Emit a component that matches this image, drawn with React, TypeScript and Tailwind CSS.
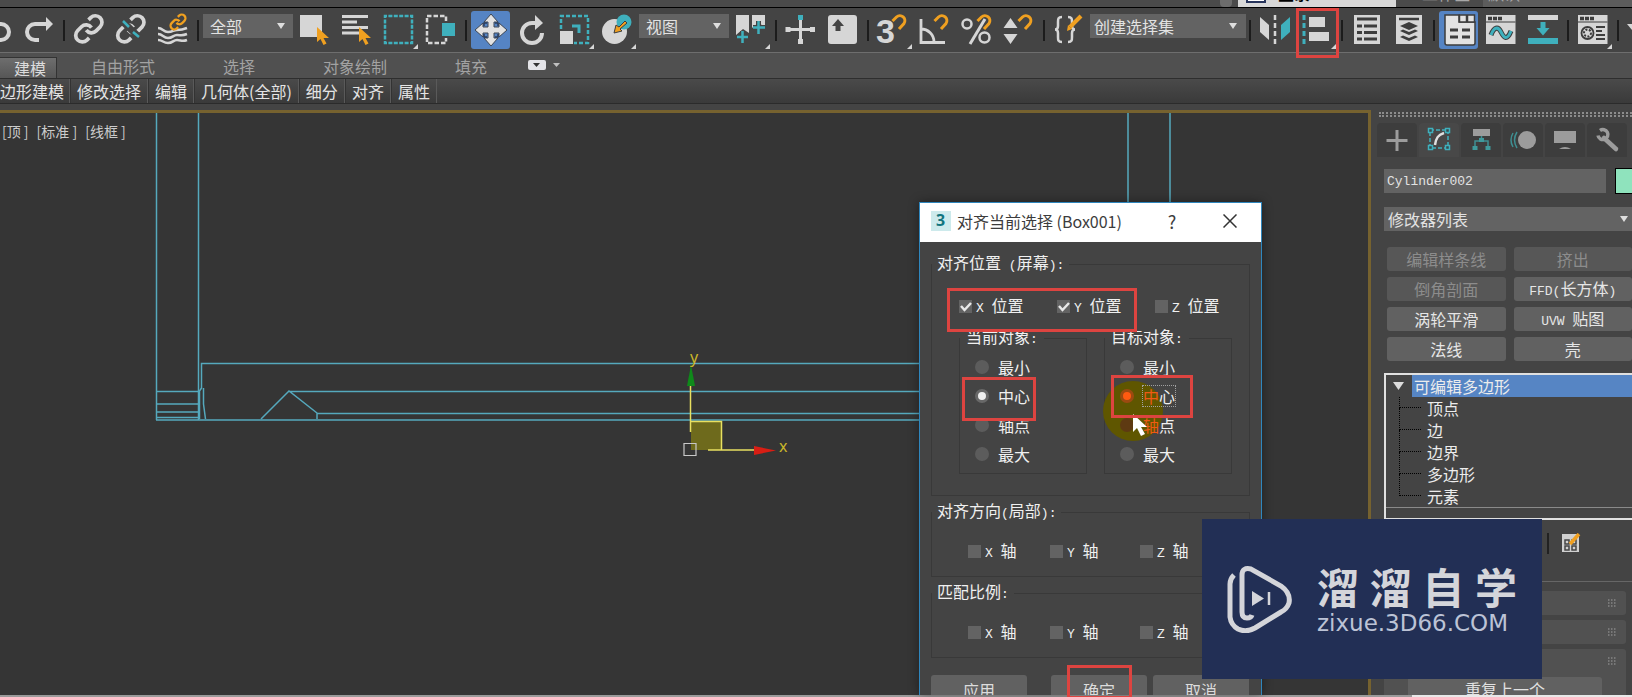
import { useState } from 'react';
import type { ReactNode } from 'react';
import clsx from 'clsx';

const W = '#d6d6d6';
const TEAL = '#3fb0bd';
const ORANGE = '#f0a020';
const DARK = '#3d3d3d';

const LINK_A = 'M10 13a5 5 0 0 0 7.54.54l3-3a5 5 0 0 0-7.07-7.07l-1.72 1.71';
const LINK_B = 'M14 11a5 5 0 0 0-7.54-.54l-3 3a5 5 0 0 0 7.07 7.07l1.71-1.71';

// Latin characters are half-width in the tool font, CJK ones full-width
function Mixed({ text }: { text: string }) {
  const parts = text.split(/([\x20-\x7e]+)/).filter(Boolean);
  return (
    <span className="whitespace-pre">
      {parts.map((part, i) =>
        /^[\x20-\x7e]/.test(part) ? (
          <span key={i} className="font-['Liberation_Mono','Noto_Sans_CJK_SC',monospace] text-[13px]">
            {part}
          </span>
        ) : (
          part
        )
      )}
    </span>
  );
}

type ToolProps = { label: string; flyout?: boolean; active?: boolean; children: ReactNode };

function Tool({ label, flyout, active, children }: ToolProps) {
  return (
    <button type="button" aria-label={label} aria-pressed={active} className="h-[42px] w-[42px] shrink-0">
      <svg viewBox="0 0 42 42" className="h-[42px] w-[42px]" fill="none">
        {active && <rect x="1" y="2" width="39" height="38" rx="3" fill="#5584c4" />}
        {children}
        {flyout && <path d="M40 35v5h-5z" fill={W} />}
      </svg>
    </button>
  );
}

function Separator() {
  return (
    <div className="flex w-2 shrink-0 justify-center">
      <div className="h-[21px] w-[2px] bg-[#1c1c1c]" />
    </div>
  );
}

function Magnet({ x = 19 }: { x?: number }) {
  return (
    <g transform={`translate(${x} 5)`} stroke={ORANGE} strokeWidth="3">
      <path d="M1.500 7l4-4a5 5 0 0 1 7.500 6.500L8 15" />
    </g>
  );
}

function Cursor() {
  return <path d="M23 18v15l3.500-3 3 6 3-1.500-3-5.500h5.500z" fill={ORANGE} />;
}

function Dropdown({ label, options, className }: { label: string; options: string[]; className: string }) {
  return (
    <div className={clsx('relative shrink-0', className)}>
      <select
        aria-label={label}
        className="block h-6 w-full appearance-none bg-[#636363] px-1 text-base leading-6 text-[#e2e2e2] outline-none"
      >
        {options.map((o) => (
          <option key={o}>{o}</option>
        ))}
      </select>
      <svg viewBox="0 0 8 6" className="pointer-events-none absolute right-[9px] top-[9px] h-[6px] w-2">
        <path d="M0 0h8L4 6z" fill="#dedede" />
      </svg>
    </div>
  );
}

function TopStrip() {
  return (
    <header className="flex h-2 shrink-0 items-end overflow-hidden border-b border-black bg-[#4a4a4a] pl-[1220px] text-base leading-7">
      <span className="h-[7px] w-3 shrink-0 rounded-b bg-[#6c6c6c]" />
      <span className="ml-[6px] flex h-[7px] w-[158px] shrink-0 items-end gap-3 bg-[#d8d8d8] pl-2 font-bold text-black">
        <span className="mb-1 h-1 w-5 border-2 border-t-0 border-[#27345c] bg-white" />
        登录
      </span>
      <span className="ml-[26px] w-[61px] shrink-0 text-[#a8a8a8]">工作区</span>
      <span className="flex h-[7px] flex-1 items-end bg-[#5c5c5c] pl-[5px] text-[#a8a8a8]">默认</span>
    </header>
  );
}

function Toolbar() {
  return (
    <div role="toolbar" className="flex h-11 shrink-0 items-center overflow-hidden bg-[#444444]">
      <div className="-ml-6 flex shrink-0">
        <Tool label="撤销">
          <path d="M14 15h11a8 8 0 0 1 0 16h-3" stroke={W} strokeWidth="4" />
        </Tool>
        <Tool label="重做">
          <path d="M28 15H17a8 8 0 0 0 0 16h4" stroke={W} strokeWidth="4" />
          <path d="M28 8l7 7-7 7z" fill={W} />
        </Tool>
      </div>
      <Separator />
      <Tool label="选择并链接">
        <g transform="translate(5 4) scale(1.320)" stroke={W} strokeWidth="2.800">
          <path d={LINK_A} />
          <path d={LINK_B} />
        </g>
      </Tool>
      <Tool label="取消链接">
        <g transform="translate(5 4) scale(1.320)" stroke={W} strokeWidth="2.800">
          <path d={LINK_A} />
          <path d={LINK_B} />
        </g>
        <path d="M12 12l18 17" stroke="#444" strokeWidth="7" />
        <path d="M13 12l6 6M23 23l6 5" stroke={TEAL} strokeWidth="2.500" />
      </Tool>
      <Tool label="绑定到空间扭曲">
        <path
          d="M6 19c5 0 5 4 10 4s5-2 9-2 5 0 10-2M6 25c5 0 5 4 10 4s5-3 9-3 5 1 10-1M6 31c5 0 5 3 10 3s5-3 9-3 5 2 10 0"
          stroke={W}
          strokeWidth="2.500"
        />
        <g transform="translate(17 4) scale(0.750)">
          <path d="M3 20L21 4" stroke="#444" strokeWidth="10" />
          <g stroke={ORANGE} strokeWidth="3">
            <path d={LINK_A} />
            <path d={LINK_B} />
          </g>
        </g>
      </Tool>
      <Separator />
      <Dropdown label="选择过滤器" options={['全部', '几何体', '图形']} className="mb-[9px] w-[92px] px-px [&>select]:pl-[7px]" />
      <Tool label="选择对象">
        <path d="M6 6h22v22H6z" fill={W} />
        <Cursor />
      </Tool>
      <Tool label="按名称选择">
        <path d="M6 7.500h26M6 13h15M6 18.500h26M6 24h20" stroke={W} strokeWidth="3" />
        <Cursor />
      </Tool>
      <Tool label="矩形选择区域" flyout>
        <rect x="7" y="7" width="27" height="27" stroke={TEAL} strokeWidth="2.500" strokeDasharray="4 1.400" strokeDashoffset="2" />
      </Tool>
      <Tool label="窗口/交叉">
        <path d="M26 12V7H7v27h19v-5" stroke={W} strokeWidth="2.500" strokeDasharray="4.500 2" />
        <path d="M22 14h13v13H22z" fill={TEAL} />
      </Tool>
      <Separator />
      <Tool label="选择并移动" active>
        <g stroke="#3c4654" strokeWidth="1" fill="#e2e2e2">
          <path d="M21 5l7 8h-4v5h5v-4l8 7-8 7v-4h-5v5h4l-7 8-7-8h4v-5h-5v4l-8-7 8-7v4h5v-5h-4z" />
        </g>
        <path d="M14 17v-3h3M25 14h3v3M28 25v3h-3M17 28h-3v-3" stroke="#2c3c58" strokeWidth="1.500" />
      </Tool>
      <Tool label="选择并旋转">
        <path d="M24 14h-4a10 10 0 1 0 10 10" stroke={W} strokeWidth="4" />
        <path d="M23 6l8 8-8 7z" fill={W} />
      </Tool>
      <Tool label="选择并均匀缩放" flyout>
        <path d="M7 20V7h27v27H20" stroke={TEAL} strokeWidth="2.500" strokeDasharray="4 2" />
        <path d="M18 17h7v7" stroke={TEAL} strokeWidth="3" />
        <path d="M6 22h13v13H6z" fill={W} />
      </Tool>
      <Tool label="选择并放置" flyout>
        <circle cx="18.500" cy="22.500" r="12.500" fill={W} />
        <circle cx="28" cy="13" r="7.500" fill={TEAL} />
        <path d="M29 12l-6 6-3-2-2 8 8-2-2-2 7-6z" fill={ORANGE} stroke={DARK} strokeWidth="1" />
      </Tool>
      <Dropdown label="参考坐标系" options={['视图', '屏幕', '世界']} className="mb-[9px] w-[92px] px-px [&>select]:pl-[7px]" />
      <Tool label="使用轴点中心" flyout>
        <path d="M6 6h13v18l-6-4-7 6zM22 6h13v14l-6-7-7 6z" fill={W} />
        <path d="M12.500 22v12M7 28h11M28.500 12v13M23 18.500h12" stroke="#444" strokeWidth="5" />
        <path d="M12.500 22v12M7 28h11M28.500 12v13M23 18.500h12" stroke={TEAL} strokeWidth="2.500" />
      </Tool>
      <Separator />
      <Tool label="选择并操纵">
        <path d="M7 20.500h27M20.500 9v25" stroke={W} strokeWidth="3" />
        <path d="M5.500 18h5v5h-5zM30 18h5v5h-5zM18 30h5v5h-5z" fill={W} />
        <path d="M18 6h5v5h-5z" fill={TEAL} />
      </Tool>
      <Tool label="键盘快捷键覆盖切换">
        <rect x="6" y="6" width="29" height="29" rx="3" fill={W} />
        <path d="M16 10l6 7h-3.500v5h-5v-5H10z" fill="#444" />
      </Tool>
      <Separator />
      <Tool label="捕捉开关" flyout>
        <text x="4" y="34" fill={W} fontSize="34" fontWeight="700" fontFamily="Liberation Sans">
          3
        </text>
        <Magnet />
      </Tool>
      <Tool label="角度捕捉切换">
        <path d="M7 10v23.500h24M7 20a13 13 0 0 1 13 13" stroke={W} strokeWidth="2.800" />
        <Magnet />
      </Tool>
      <Tool label="百分比捕捉切换">
        <circle cx="11" cy="15" r="4.500" stroke={W} strokeWidth="2.500" />
        <circle cx="28.500" cy="28.500" r="5" stroke={W} strokeWidth="2.500" />
        <path d="M14 35L29 10" stroke={W} strokeWidth="3" />
        <Magnet x={20} />
      </Tool>
      <Tool label="微调器捕捉切换">
        <path d="M12.500 9l7 10h-14zM12.500 35l7-10h-14z" fill={W} />
        <Magnet />
      </Tool>
      <Separator />
      <Tool label="编辑命名选择集">
        <path
          d="M14 8c-4 0-4 2-4 5v4c0 2-1 3.500-3 3.500 2 0 3 1.500 3 3.500v4c0 3 0 5 4 5M20 8c4 0 4 2 4 5v4c0 2 1 3.500 3 3.500-2 0-3 1.500-3 3.500v4c0 3 0 5-4 5"
          stroke={W}
          strokeWidth="2.500"
        />
        <path d="M33 7L22 18" stroke={ORANGE} strokeWidth="4" />
        <path d="M20 16l4 4-5 2z" fill={ORANGE} />
      </Tool>
      <Dropdown label="命名选择集" options={['创建选择集']} className="mb-[9px] w-[156px]" />
      <Separator />
      <Tool label="镜像">
        <path d="M6 8l9 8v15l-9-8z" fill={W} />
        <path d="M21 6v29" stroke={W} strokeWidth="2.500" strokeDasharray="5 3" />
        <path d="M36 8l-9 8v15l9-8z" fill={TEAL} />
      </Tool>
      <Tool label="对齐" flyout>
        <path d="M8 6v29" stroke={TEAL} strokeWidth="3" strokeDasharray="5 3" />
        <path d="M13 8h16v10H13zM13 23h20v9H13z" fill={W} />
      </Tool>
      <Separator />
      <Tool label="切换层资源管理器">
        <path d="M8 6h26v29H8z" fill={W} />
        <path d="M11 10h20M11 17h5M18 17h13M11 23.500h5M18 23.500h13M11 30h5M18 30h13" stroke={DARK} strokeWidth="2.800" />
      </Tool>
      <Tool label="切换场景资源管理器">
        <path d="M8 6h26v29H8z" fill={W} />
        <path d="M11 10h20" stroke={DARK} strokeWidth="2.500" />
        <path
          d="M21 13l9 4-9 4-9-4zM12 22l3-1.500 6 2.500 6-2.500 3 1.500-9 4zM12 28l3-1.500 6 2.500 6-2.500 3 1.500-9 4z"
          fill={DARK}
        />
      </Tool>
      <Separator />
      <Tool label="显示功能区" active>
        <path d="M7 6h14v7h16v21q0 2-2 2H9q-2 0-2-2z" fill="#e2e2e2" stroke={DARK} strokeWidth="1.500" />
        <path d="M21.500 6h7v7h-7zM29.500 6h7v7h-7z" fill="#e2e2e2" stroke={DARK} strokeWidth="1.500" />
        <path d="M12 21h8M24 21h8M12 28h8M24 28h8" stroke={DARK} strokeWidth="3" />
      </Tool>
      <Tool label="曲线编辑器">
        <path d="M6 6h29.500v29H6z" fill={W} />
        <path d="M8 9.500h14" stroke={DARK} strokeWidth="3.500" strokeDasharray="4 1" />
        <path d="M6 13h29.500" stroke={DARK} strokeWidth="1" />
        <path d="M11 26c3-8 7-9 10-3s6 9 10-1" stroke={DARK} strokeWidth="5" />
        <path d="M11 26c3-8 7-9 10-3s6 9 10-1" stroke={TEAL} strokeWidth="3" />
      </Tool>
      <Tool label="图解视图">
        <path d="M6 6h30v5H6z" fill={W} />
        <path d="M6 29h30v6H6z" fill={TEAL} />
        <path d="M18.500 13h5v6h4L21 26.500 14.500 19h4z" fill={TEAL} />
      </Tool>
      <Separator />
      <Tool label="材质编辑器" flyout>
        <path d="M6 6h29.500v29H6z" fill={W} />
        <path d="M8 9.500h14" stroke={DARK} strokeWidth="3.500" strokeDasharray="4 1" />
        <path d="M6 13h29.500" stroke={DARK} strokeWidth="1" />
        <circle cx="15.500" cy="24" r="6" stroke={DARK} strokeWidth="1.800" />
        <circle cx="15.500" cy="24" r="3.500" stroke={DARK} strokeWidth="2" strokeDasharray="2 1.500" />
        <path d="M24 18h9M24 22h6M24 26h9M24 30h9" stroke={DARK} strokeWidth="2" />
      </Tool>
      <Separator />
      <Tool label="渲染设置">
        <path d="M5 15h10v12z" fill={W} />
      </Tool>
    </div>
  );
}

function Ribbon() {
  const tabs = ['自由形式', '选择', '对象绘制', '填充'];
  const panels = ['修改选择', '编辑', '几何体(全部)', '细分', '对齐', '属性'];
  return (
    <>
      <nav className="flex h-[27px] shrink-0 border-b border-t border-b-[#2e2e2e] border-t-[#6e6e6e] bg-[#505050] text-base leading-[26px] text-[#a2a2a2]">
        <button
          type="button"
          className="mt-1 w-[57px] border-r border-t border-[#333] bg-linear-to-b from-[#6e6e6e] to-[#565656] pl-[14px] text-left leading-[18px] text-[#dcdcdc]"
        >
          建模
        </button>
        {tabs.map((t) => (
          <button key={t} type="button" className="px-[34px]">
            {t}
          </button>
        ))}
        <button type="button" aria-label="最小化功能区" className="ml-[7px] flex items-center gap-[7px] pb-px">
          <svg viewBox="0 0 18 10" className="h-[10px] w-[18px]">
            <rect width="18" height="10" rx="2" fill="#e4e4e8" />
            <path d="M5 3h7L8.500 7z" fill="#333" />
          </svg>
          <svg viewBox="0 0 7 4" className="h-1 w-[7px]">
            <path d="M0 0h7L3.500 4z" fill="#c0c0c0" />
          </svg>
        </button>
      </nav>
      <div className="flex h-[25px] shrink-0 border-b border-[#2b2b2b] bg-linear-to-b from-[#4a4a4a] to-[#3a3a3a] text-base leading-6 text-[#e4e4e4]">
        <button type="button" className="w-[70px] border-r border-[#5a5a5a] text-left">
          边形建模
        </button>
        {panels.map((p) => (
          <button key={p} type="button" className="border-l border-r border-l-[#333] border-r-[#5a5a5a] px-[6px]">
            {p}
          </button>
        ))}
      </div>
    </>
  );
}

function Viewport() {
  return (
    <section className="relative min-w-0 flex-1 border-r-[3px] border-t-[3px] border-[#76622f] bg-[#353535]">
      <div className="flex gap-2 pl-[2px] pt-[6px] text-sm leading-6 text-[#cccccc]">
        <button type="button">[顶 ]</button>
        <button type="button">[标准 ]</button>
        <button type="button">[线框 ]</button>
      </div>
      {/* wireframe of the frame model, seen from the top */}
      <svg
        viewBox="0 113 1368 582"
        preserveAspectRatio="xMinYMin slice"
        className="pointer-events-none absolute inset-0 h-full w-full"
        fill="none"
      >
        <g stroke="#55a9bd" strokeWidth="1.500">
          <path d="M156.500 113v307M198.500 113v307M1128 113v200M1170 113v200" />
          <path d="M156 391.500h43M156 404h43M156 412h43M156 417.500h43M156 420h1000" />
          <path d="M199.500 419v-28l2-3v-24.500H1156M203.500 388v16l2 15" />
          <path d="M261 419l28-28 28 22v6M289 391.500h867M317 413.500h839" />
        </g>
        <path d="M691 421h30v29h-30z" fill="#6e6a1c" />
        <path d="M690.500 432v-46M691 421.500h30.500V450M708 450h46" stroke="#e8e060" strokeWidth="1.500" />
        <path d="M691 365l4 21h-8z" fill="#0f8a1a" />
        <path d="M776 450.500l-22-4.500v9z" fill="#d81e14" />
        <path d="M684 443.500h12v12h-12z" stroke="#c8c8c8" strokeWidth="1.200" />
        <g fill="#c9b62a" fontSize="16" fontFamily="Noto Sans">
          <text x="690" y="363">y</text>
          <text x="779" y="452">x</text>
        </g>
      </svg>
    </section>
  );
}

function PanelTab({ label, active, children }: ToolProps) {
  return (
    <button
      type="button"
      aria-label={label}
      className={clsx('mx-px h-[34px] w-10 shrink-0 rounded-t', active ? 'bg-[#484848]' : 'bg-[#3d3d3d]')}
    >
      <svg viewBox="1 0 40 34" className="h-[34px] w-10" fill="none">
        {children}
      </svg>
    </button>
  );
}

function ModifierButton({ text, disabled }: { text: string; disabled?: boolean }) {
  return (
    <button
      type="button"
      disabled={disabled}
      className="h-6 rounded-[3px] bg-[#616161] text-base leading-[22px] text-[#e6e6e6] disabled:bg-[#575757] disabled:text-[#8c8c8c]"
    >
      <Mixed text={text} />
    </button>
  );
}

function Rollout({ children }: { children?: ReactNode }) {
  return (
    <div className="relative min-h-6 rounded-[3px] bg-[#515151]">
      <svg viewBox="0 0 8 8" className="absolute right-[10px] top-2 size-2">
        <path d="M0 1h8M0 4h8M0 7h8" stroke="#858585" strokeWidth="1.500" strokeDasharray="1.500 1.500" />
      </svg>
      {children}
    </div>
  );
}

function CommandPanel() {
  const [name, setName] = useState('Cylinder002');
  const levels = ['顶点', '边', '边界', '多边形', '元素'];
  const g = '#9c9c9c';
  return (
    <aside className="flex w-[261px] shrink-0 flex-col overflow-hidden bg-[#444444]">
      <div className="ml-2 mt-[2px] h-[5px] shrink-0 border-b-2 border-t-2 border-dotted border-[#8c8c8c]" />
      <div className="ml-[5px] mt-[6px] flex shrink-0">
        <PanelTab label="创建">
          <path d="M10.500 17.500h21M21 7v21" stroke={g} strokeWidth="3" />
        </PanelTab>
        <PanelTab label="修改" active>
          <path d="M12 7h18v18H12z" stroke={TEAL} strokeWidth="1.500" strokeDasharray="4 2" />
          <path d="M10.500 5.500h4v4h-4zM27.500 5.500h4v4h-4zM10.500 22.500h4v4h-4zM27.500 22.500h4v4h-4z" fill="#3a4a4c" stroke={TEAL} strokeWidth="1.500" />
          <path d="M17 22c1-7 3-10 9-12" stroke="#e0e0e0" strokeWidth="2.500" />
        </PanelTab>
        <PanelTab label="层次">
          <path d="M13 6h17v7H13z" fill={g} />
          <path d="M21.500 13v5M15 23v-5h13v5" stroke="#3f8f92" strokeWidth="1.500" />
          <path d="M19 15h5v4h-5zM12.500 23h5v4h-5zM25.500 23h5v4h-5z" fill="#3f9a9c" />
        </PanelTab>
        <PanelTab label="运动">
          <circle cx="25" cy="17" r="9" fill={g} />
          <path d="M15 9q-5 8 0 16M11 10q-4 7 0 14" stroke="#3f8f92" strokeWidth="1.500" />
        </PanelTab>
        <PanelTab label="显示">
          <path d="M10 8h22v12H10z" fill={g} />
          <path d="M15 26q6-4 12 0z" fill={g} />
        </PanelTab>
        <PanelTab label="实用程序">
          <path d="M18 15l12 11" stroke={g} strokeWidth="4.500" strokeLinecap="round" />
          <path d="M14 7.500a5 5 0 1 1-2 5" stroke={g} strokeWidth="3.500" />
        </PanelTab>
      </div>
      <div className="ml-[13px] mt-[11px] flex shrink-0 items-center gap-[9px]">
        <input
          aria-label="对象名称"
          value={name}
          onChange={(e) => setName(e.target.value)}
          className="h-6 w-[222px] bg-[#636363] pl-[3px] font-['Liberation_Mono',monospace] text-[13px] text-[#e2e2e2] outline-none"
        />
        <button type="button" aria-label="对象颜色" className="h-[26px] flex-1 border border-r-0 border-black bg-[#8fe3bd]" />
      </div>
      <Dropdown label="修改器列表" options={['修改器列表']} className="ml-[13px] mt-[13px] -mr-[5px]" />
      <div className="mt-4 grid shrink-0 grid-cols-2 gap-x-2 gap-y-[6px] pl-4">
        <ModifierButton text="编辑样条线" disabled />
        <ModifierButton text="挤出" disabled />
        <ModifierButton text="倒角剖面" disabled />
        <ModifierButton text="FFD(长方体)" />
        <ModifierButton text="涡轮平滑" />
        <ModifierButton text="UVW 贴图" />
        <ModifierButton text="法线" />
        <ModifierButton text="壳" />
      </div>
      <div className="ml-[13px] mt-3 shrink-0 border-b-2 border-l-2 border-t-2 border-[#e0e0e0] text-base leading-[22px] text-[#ececec]">
        <div className="flex items-center">
          <button type="button" aria-label="折叠" className="flex w-[26px] items-center pl-[7px]">
            <svg viewBox="0 0 11 8" className="h-2 w-[11px]">
              <path d="M0 0h11L5.500 8z" fill="#dcdcdc" />
            </svg>
          </button>
          <span className="flex-1 bg-[#5685c4] pl-[2px]">可编辑多边形</span>
        </div>
        <ul className="border-b border-[#8a8a8a]">
          {levels.map((level, i) => (
            <li key={level} className="flex h-[22px] pl-[13px]">
              <span
                className={clsx(
                  'mr-[6px] w-[22px] border-b border-l border-dotted border-black',
                  i === 0 ? 'h-[11px]' : '-mt-[11px] h-[22px]'
                )}
              />
              {level}
            </li>
          ))}
        </ul>
        <div className="h-[10px]" />
      </div>
      <div className="mt-[10px] flex h-[26px] shrink-0 items-center pl-[176px]">
        <div className="h-[21px] w-[2px] bg-[#222]" />
        <button type="button" aria-label="配置修改器集" className="ml-3">
          <svg viewBox="0 0 20 20" className="size-5" fill="none">
            <path d="M1 1h17v18H1z" fill="#d0d0d0" />
            <path d="M4 7h4v4H4zM11 7h4v4h-4zM4 13h4v4H4zM11 13h4v4h-4z" stroke="#444" strokeWidth="1.500" />
            <path d="M18 1l-9 10" stroke={ORANGE} strokeWidth="3.500" />
          </svg>
        </button>
      </div>
      <div className="mt-[25px] flex shrink-0 flex-col gap-[5px] border-t border-[#666] pl-[13px] pr-[6px] pt-[9px]">
        <Rollout />
        <Rollout />
        <Rollout>
          <div className="px-6 pt-7">
            <button type="button" className="h-6 w-full rounded-[3px] bg-[#616161] text-base leading-6 text-[#e2e2e2]">
              重复上一个
            </button>
          </div>
        </Rollout>
      </div>
    </aside>
  );
}

function Check({ text, checked, className }: { text: string; checked?: boolean; className: string }) {
  return (
    <label className={clsx('relative flex h-6 shrink-0 items-center gap-1', className)}>
      <input type="checkbox" defaultChecked={checked} className="peer size-[13px] appearance-none bg-[#636363]" />
      <svg viewBox="0 0 13 13" className="absolute left-0 hidden size-[13px] peer-checked:block">
        <path d="M2 6l3.500 4L12 3" fill="none" stroke="#e8e8e8" strokeWidth="2.500" />
      </svg>
      <Mixed text={text} />
    </label>
  );
}

function AlignTarget({ title, name, highlight }: { title: string; name: string; highlight?: boolean }) {
  const options = ['最小', '中心', '轴点', '最大'];
  return (
    <fieldset className="w-32 border border-[#393939] pb-[5px] pl-[15px] pt-[2px]">
      <legend className="-ml-[15px] flex h-6 items-center px-[6px] leading-6">
        <Mixed text={title} />
      </legend>
      {options.map((o) => {
        const lit = highlight && (o === '中心' || o === '轴点');
        return (
          <label key={o} className="relative z-10 flex h-[29px] items-center gap-[9px]">
            <input
              type="radio"
              name={name}
              defaultChecked={o === '中心'}
              className={clsx(
                'size-[14px] appearance-none rounded-full checked:border-[3px]',
                lit
                  ? 'bg-[#5e3a12] checked:border-[#9c4a10] checked:bg-[#ff5a10]'
                  : 'bg-[#5c5c5c] checked:border-[#686868] checked:bg-[#eeeeee]'
              )}
            />
            <span className={clsx(highlight && o === '中心' && 'leading-5 outline-1 outline-dotted outline-[#a0a0a0]')}>
              <span className={clsx(lit && 'text-[#ee5a14]')}>{o[0]}</span>
              {o[1]}
            </span>
          </label>
        );
      })}
    </fieldset>
  );
}

function AxisGroup({ title }: { title: string }) {
  return (
    <fieldset className="mt-1 border border-[#393939] pb-[13px] pt-[15px]">
      <legend className="flex h-6 items-center px-[5px] leading-6">
        <Mixed text={title} />
      </legend>
      <div className="flex h-6 pl-9">
        <Check text="X 轴" className="w-[82px]" />
        <Check text="Y 轴" className="w-[90px]" />
        <Check text="Z 轴" className="w-[90px]" />
      </div>
    </fieldset>
  );
}

function AlignDialog() {
  const button = 'h-[30px] w-24 rounded-[3px] bg-[#616161] text-[#dcdcdc]';
  return (
    <div
      role="dialog"
      aria-label="对齐当前选择"
      className="absolute bottom-[2px] left-[919px] top-[202px] w-[343px] overflow-hidden border border-b-0 border-[#2f86bd] bg-[#444444] text-base text-[#f0f0f0] shadow-[0_0_10px_rgba(0,0,0,0.4)]"
    >
      <div className="flex h-[39px] items-center bg-white pb-[3px] pl-[11px] text-[#3c3c3c]">
        <svg viewBox="0 0 20 20" className="mr-[6px] size-5">
          <path d="M0 0h20v20H0z" fill="#cdeaec" />
          <text x="5" y="15" fill="#12757f" fontSize="16" fontWeight="700" fontFamily="Noto Sans">
            3
          </text>
        </svg>
        <h2 className="flex-1">对齐当前选择 (Box001)</h2>
        <button type="button" className="w-10 text-lg">
          ?
        </button>
        <button type="button" aria-label="关闭" className="ml-[31px] mr-6">
          <svg viewBox="0 0 14 14" className="size-[14px]">
            <path d="M0.500 0.500l13 13M13.500 0.500l-13 13" stroke="#333" strokeWidth="1.500" />
          </svg>
        </button>
      </div>
      <div className="px-[11px] pt-[10px]">
        <fieldset className="border border-[#393939] pb-[21px] pt-[18px]">
          <legend className="flex h-6 items-center px-[5px] leading-6">
            <Mixed text="对齐位置 (屏幕):" />
          </legend>
          <div className="flex h-6 pl-[27px]">
            <Check text="X 位置" checked className="w-[98px]" />
            <Check text="Y 位置" checked className="w-[98px]" />
            <Check text="Z 位置" className="w-[90px]" />
          </div>
          <div className="mt-2 flex gap-[17px] pl-[27px]">
            <AlignTarget title="当前对象:" name="current" />
            <AlignTarget title="目标对象:" name="target" highlight />
          </div>
        </fieldset>
        <AxisGroup title="对齐方向(局部):" />
        <AxisGroup title="匹配比例:" />
        <div className="mt-[17px] flex">
          <button type="button" className={button}>
            应用
          </button>
          <button type="button" className={clsx(button, 'ml-6 mr-[6px]')}>
            确定
          </button>
          <button type="button" className={button}>
            取消
          </button>
        </div>
      </div>
      {/* click highlight and pointer */}
      <div className="absolute left-[183px] top-[178px] size-[60px] rounded-full bg-[#5f5600]" />
      <svg viewBox="0 0 14 22" className="absolute left-[213px] top-[211px] z-20 h-[22px] w-[14px]">
        <path d="M0 0v18l4-4 4 8 4-2-4-7h6z" fill="#fff" />
      </svg>
    </div>
  );
}

function Watermark() {
  return (
    <div className="absolute left-[1202px] top-[519px] flex h-40 w-[340px] items-center bg-[#222f55] pl-[25px] text-[#d4d5da]">
      <svg viewBox="0 0 66 68" className="h-[68px] w-[66px] shrink-0" fill="none" stroke="#d4d5da">
        <path
          d="M25 50q-1 3-5 3-5 0-5-6V10q0-8 9-6l30 17q10 7 8 17-2 6-8 9L28 63q-9 5-17 1-7-4-8-12V19q0-5 4-9"
          strokeWidth="5"
        />
        <path d="M25 26v15l12-7.500z" fill="#d4d5da" stroke="none" />
        <path d="M42 27v13" strokeWidth="2.500" />
      </svg>
      <div className="ml-[24px] w-[200px]">
        <div className="flex justify-between text-[42px] font-bold leading-[44px]">
          {[...'溜溜自学'].map((ch, i) => (
            <span key={i}>{ch}</span>
          ))}
        </div>
        <p className="mt-[3px] font-['DejaVu_Sans',sans-serif] text-[23px] leading-6 text-[#bcc3d6]">zixue.3D66.COM</p>
      </div>
    </div>
  );
}

function Marker({ className }: { className: string }) {
  return <div className={clsx('pointer-events-none absolute z-30 border-[3px] border-[#dd4440]', className)} />;
}

export default function App() {
  return (
    <div className="relative flex h-screen flex-col overflow-hidden bg-[#444444] font-['Noto_Sans_CJK_SC',sans-serif]">
      <TopStrip />
      <Toolbar />
      <Ribbon />
      <main className="mt-[6px] flex min-h-0 flex-1">
        <Viewport />
        <CommandPanel />
      </main>
      <footer className="flex h-[2px] shrink-0">
        <div className="w-[1412px] bg-[#9a9a9a]" />
        <div className="flex-1 bg-[#e8e8e8]" />
      </footer>
      <AlignDialog />
      <Watermark />
      <Marker className="left-[1296px] top-2 h-[50px] w-[43px]" />
      <Marker className="left-[947px] top-[288px] h-11 w-[190px]" />
      <Marker className="left-[962px] top-[377px] h-11 w-[74px]" />
      <Marker className="left-[1111px] top-[375px] h-[43px] w-[82px]" />
      <Marker className="left-[1067px] top-[665px] h-[34px] w-[65px]" />
    </div>
  );
}
